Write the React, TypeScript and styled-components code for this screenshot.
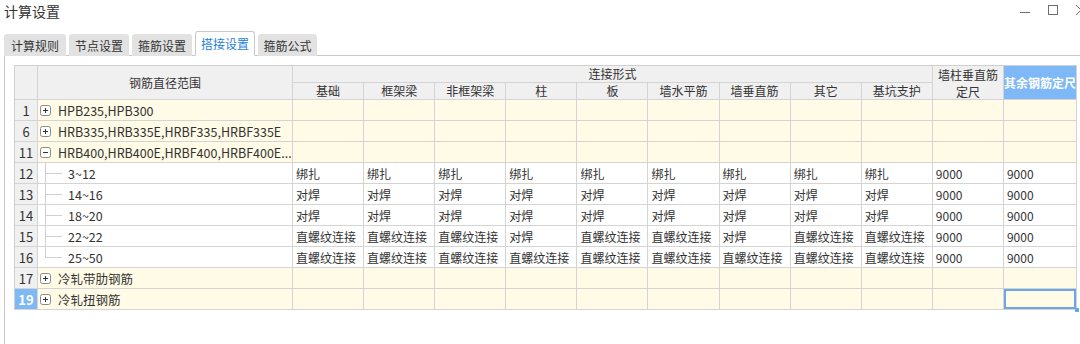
import React from 'react';
import styled, { createGlobalStyle, css } from 'styled-components';

const GlobalStyle = createGlobalStyle`
  html, body { margin: 0; padding: 0; background: #fff; }
  body {
    font-family: "Noto Sans CJK SC", "Noto Sans", sans-serif;
    color: #333;
    overflow: hidden;
  }
`;

const COLS = ['基础', '框架梁', '非框架梁', '柱', '板', '墙水平筋', '墙垂直筋', '其它', '基坑支护'];

type Row = {
    no: number;
    name: string;
    kind: 'group' | 'child';
    open?: boolean;
    last?: boolean;
    values?: string[];
    selected?: boolean;
};

const B = '绑扎', D = '对焊', Z = '直螺纹连接';

const rows: Row[] = [
    { no: 1, name: 'HPB235,HPB300', kind: 'group' },
    { no: 6, name: 'HRB335,HRB335E,HRBF335,HRBF335E', kind: 'group' },
    { no: 11, name: 'HRB400,HRB400E,HRBF400,HRBF400E...', kind: 'group', open: true },
    { no: 12, name: '3~12', kind: 'child', values: [B, B, B, B, B, B, B, B, B, '9000', '9000'] },
    { no: 13, name: '14~16', kind: 'child', values: [D, D, D, D, D, D, D, D, D, '9000', '9000'] },
    { no: 14, name: '18~20', kind: 'child', values: [D, D, D, D, D, D, D, D, D, '9000', '9000'] },
    { no: 15, name: '22~22', kind: 'child', values: [Z, Z, Z, D, Z, Z, D, Z, Z, '9000', '9000'] },
    { no: 16, name: '25~50', kind: 'child', last: true, values: [Z, Z, Z, Z, Z, Z, Z, Z, Z, '9000', '9000'] },
    { no: 17, name: '冷轧带肋钢筋', kind: 'group' },
    { no: 19, name: '冷轧扭钢筋', kind: 'group', selected: true },
];

const tabs = [
    { label: '计算规则', w: 62 },
    { label: '节点设置', w: 60 },
    { label: '箍筋设置', w: 60 },
    { label: '搭接设置', w: 60, active: true },
    { label: '箍筋公式', w: 59 },
];

export default function App() {
    return (
        <>
            <GlobalStyle />
            <Window>
                <TitleBar>
                    <Title>计算设置</Title>
                    <WinButtons>
                        <svg width="12" height="12" viewBox="0 0 12 12"><path d="M1 8.5h10" stroke="#6f6f6f" strokeWidth="1" /></svg>
                        <svg width="12" height="12" viewBox="0 0 12 12"><rect x="1.5" y="1.5" width="9" height="9" fill="none" stroke="#6f6f6f" /></svg>
                        <svg width="12" height="12" viewBox="0 0 12 12"><path d="M1 1l10 10M11 1L1 11" stroke="#6f6f6f" /></svg>
                    </WinButtons>
                </TitleBar>
                <Tabs>
                    {tabs.map((t) => (
                        <Tab key={t.label} $w={t.w} $active={t.active}>{t.label}</Tab>
                    ))}
                </Tabs>
                <Panel>
                    <Grid>
                        <HeadCell style={{ gridRow: '1 / 3' }} />
                        <HeadCell style={{ gridRow: '1 / 3' }}>钢筋直径范围</HeadCell>
                        <HeadCell style={{ gridColumn: '3 / 12' }}>连接形式</HeadCell>
                        <HeadCell style={{ gridRow: '1 / 3', gridColumn: '12' }}>
                            <Stack>
                                <span>墙柱垂直筋</span>
                                <span>定尺</span>
                            </Stack>
                        </HeadCell>
                        <HeadCell $blue style={{ gridRow: '1 / 3', gridColumn: '13' }}>其余钢筋定尺</HeadCell>
                        {COLS.map((c) => (
                            <HeadCell key={c}>{c}</HeadCell>
                        ))}
                        {rows.map((r) => (
                            <React.Fragment key={r.no}>
                                <NoCell $selected={r.selected}>{r.no}</NoCell>
                                <NameCell $group={r.kind === 'group'}>
                                    {r.kind === 'group' ? (
                                        <>
                                            <Toggle>
                                                <svg width="11" height="11" viewBox="0 0 11 11">
                                                    <rect x="0.5" y="0.5" width="10" height="10" rx="2" fill="#fff" stroke="#8a8a8a" />
                                                    <path d="M3 5.5h5" stroke="#333" />
                                                    {!r.open && <path d="M5.5 3v5" stroke="#333" />}
                                                </svg>
                                            </Toggle>
                                            <Label>{r.name}</Label>
                                        </>
                                    ) : (
                                        <>
                                            <Guide $last={r.last} />
                                            <Label $child>{r.name}</Label>
                                        </>
                                    )}
                                </NameCell>
                                {Array.from({ length: 11 }).map((_, i) => (
                                    <DataCell key={i} $group={r.kind === 'group'} $focus={r.selected && i === 10}>
                                        {r.values ? r.values[i] : ''}
                                        {r.selected && i === 10 && <Handle />}
                                    </DataCell>
                                ))}
                            </React.Fragment>
                        ))}
                    </Grid>
                </Panel>
            </Window>
        </>
    );
}

const Window = styled.div`
    width: 1080px;
    height: 344px;
    display: flex;
    flex-direction: column;
    overflow: hidden;
`;

const TitleBar = styled.div`
    height: 26px;
    display: flex;
    align-items: flex-start;
    justify-content: space-between;
    padding-left: 4px;
`;

const Title = styled.span`
    font-size: 14px;
    line-height: 22px;
    color: #333;
`;

const WinButtons = styled.div`
    display: flex;
    gap: 16px;
    margin-top: 4px;
    margin-right: -7px;
`;

const Tabs = styled.div`
    display: flex;
    align-items: flex-end;
    gap: 3px;
    padding-left: 4px;
    height: 30px;
    position: relative;
    z-index: 1;
    margin-bottom: -1px;
`;

const Tab = styled.div<{ $active?: boolean; $w: number }>`
    box-sizing: border-box;
    width: ${(p) => p.$w}px;
    height: 22px;
    display: flex;
    align-items: center;
    justify-content: center;
    font-size: 12px;
    color: #333;
    background: #e2e2e2;
    border-radius: 3px 3px 0 0;
    ${(p) =>
        p.$active &&
        css`
            height: 25px;
            padding-bottom: 1px;
            background: #fff;
            color: #1d7fd8;
            border: 1px solid #c8c8c8;
            border-bottom-color: #fff;
        `}
`;

const Panel = styled.div`
    flex: 1;
    border-top: 1px solid #c8c8c8;
    border-left: 1px solid #c8c8c8;
    margin-left: 4px;
    padding: 9px 0 0 9px;
`;

const Grid = styled.div`
    display: grid;
    grid-template-columns: 23px 255px repeat(10, 71.1px);
    grid-template-rows: 17px 17px repeat(10, 21px);
    width: max-content;
    border-top: 1px solid #d0d0d0;
    border-left: 1px solid #d0d0d0;
    font-size: 12px;
`;

const cellBase = css`
    box-sizing: border-box;
    border-right: 1px solid #d4d4d4;
    border-bottom: 1px solid #d4d4d4;
    min-width: 0;
    white-space: nowrap;
`;

const HeadCell = styled.div<{ $blue?: boolean }>`
    ${cellBase};
    background: ${(p) => (p.$blue ? '#7eb8f6' : '#f0f0f0')};
    color: ${(p) => (p.$blue ? '#fff' : '#333')};
    font-weight: ${(p) => (p.$blue ? 700 : 400)};
    display: flex;
    align-items: center;
    justify-content: center;
    line-height: 16px;
    overflow: visible;
`;

const Stack = styled.div`
    display: flex;
    flex-direction: column;
    align-items: center;
    line-height: 17px;
`;

const NoCell = styled.div<{ $selected?: boolean }>`
    ${cellBase};
    background: ${(p) => (p.$selected ? '#7eb8f6' : '#f0f0f0')};
    color: ${(p) => (p.$selected ? '#fff' : '#333')};
    font-weight: ${(p) => (p.$selected ? 700 : 400)};
    font-size: 13px;
    display: flex;
    align-items: center;
    justify-content: center;
`;

const NameCell = styled.div<{ $group?: boolean }>`
    ${cellBase};
    background: ${(p) => (p.$group ? '#fffbe6' : '#fff')};
    display: flex;
    align-items: stretch;
    overflow: hidden;
`;

const Toggle = styled.span`
    display: flex;
    align-items: center;
    margin-left: 2px;
    margin-right: 7px;
`;

const Label = styled.span<{ $child?: boolean }>`
    display: flex;
    align-items: center;
    font-size: 12.5px;
    color: #333;
    margin-left: ${(p) => (p.$child ? '6px' : '0')};
`;

const Guide = styled.span<{ $last?: boolean }>`
    width: 17px;
    margin-left: 7px;
    flex: none;
    background:
        linear-gradient(#d0d0d0, #d0d0d0) left top / 1px ${(p) => (p.$last ? '50%' : '100%')} no-repeat,
        linear-gradient(#d0d0d0, #d0d0d0) left center / 100% 1px no-repeat;
    margin-bottom: -1px;
`;

const DataCell = styled.div<{ $group?: boolean; $focus?: boolean }>`
    ${cellBase};
    background: ${(p) => (p.$group ? '#fffbe6' : '#fff')};
    display: flex;
    align-items: center;
    padding-left: 3px;
    color: #333;
    position: relative;
    overflow: hidden;
    ${(p) =>
        p.$focus &&
        css`
            overflow: visible;
            box-shadow: inset 0 0 0 2px #6aa6e8;
        `}
`;

const Handle = styled.span`
    position: absolute;
    right: -3px;
    bottom: -3px;
    width: 4px;
    height: 4px;
    background: #6aa6e8;
`;
